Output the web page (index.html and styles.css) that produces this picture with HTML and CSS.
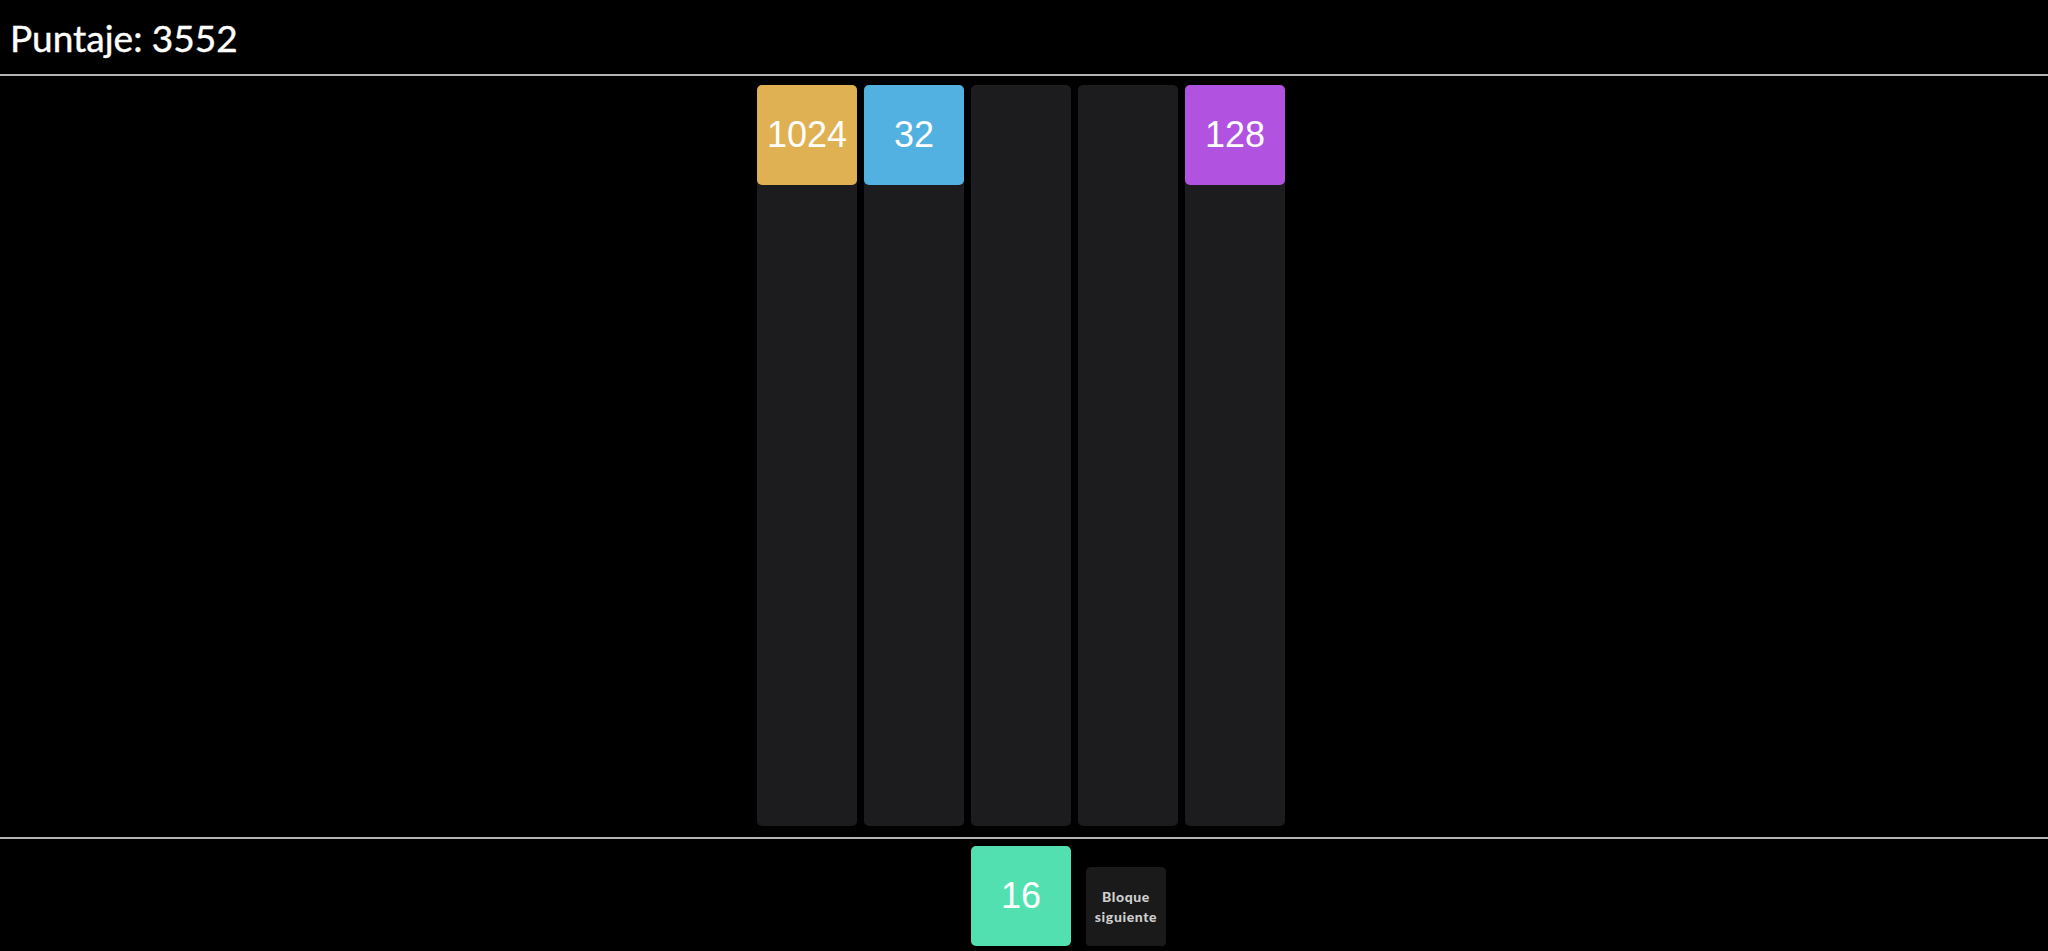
FILE: index.html
```html
<!DOCTYPE html>
<html lang="es">
<head>
  <meta charset="UTF-8">
  <title>2048 Columnas</title>
  <link rel="stylesheet" href="styles.css">
</head>
<body>
  <header class="top">
    <div class="score">Puntaje: 3552</div>
  </header>

  <main class="board-area">
    <div class="board">
      <div class="column">
        <div class="tile t1024">1024</div>
      </div>
      <div class="column">
        <div class="tile t32">32</div>
      </div>
      <div class="column"></div>
      <div class="column"></div>
      <div class="column">
        <div class="tile t128">128</div>
      </div>
    </div>
  </main>

  <footer class="bottom">
    <div class="current">
      <div class="tile t16">16</div>
    </div>
    <div class="next">
      <div class="next-box">Bloque<br>siguiente</div>
    </div>
  </footer>
</body>
</html>
```
FILE: styles.css
```css
body {
  margin: 0;
  background-color: #000;
  color: #fff;
  font-family: "Liberation Sans", Arial, sans-serif;
  overflow: hidden;
}
.top {
  height: 74px;
  display: flex;
  align-items: center;
  padding-left: 10px;
  border-bottom: 2px solid #b4b4b4;
}
.score {
  font-family: Lato, "Noto Sans", sans-serif;
  font-size: 37px;
  font-weight: 400;
  -webkit-text-stroke: 0.4px #fff;
  color: #fff;
}
.board-area {
  padding: 9px 6px 11px 0;
}
.board {
  display: flex;
  justify-content: center;
  gap: 7px;
}
.column {
  width: 100px;
  height: 741px;
  background-color: #1c1c1e;
  border-radius: 5px;
}
.tile {
  width: 100px;
  height: 100px;
  border-radius: 5px;
  display: flex;
  align-items: center;
  justify-content: center;
  font-size: 36px;
  color: #fff;
}
.t1024 { background-color: #e0b152; }
.t32 { background-color: #52b1e0; }
.t128 { background-color: #b152e0; }
.t16 { background-color: #52e0b1; }
.bottom {
  border-top: 2px solid #b4b4b4;
  padding: 7px 6px 0 0;
  display: grid;
  grid-template-columns: 1fr 100px 1fr;
}
.current {
  grid-column: 2;
}
.next {
  grid-column: 3;
  display: flex;
  align-items: flex-end;
  padding-left: 15px;
}
.next-box {
  width: 80px;
  height: 80px;
  margin-bottom: -1px;
  background-color: #1a1a1a;
  border-radius: 5px;
  display: flex;
  align-items: center;
  justify-content: center;
  text-align: center;
  font-family: Lato, "Noto Sans", sans-serif;
  font-weight: 900;
  font-size: 14px;
  letter-spacing: 0.6px;
  line-height: 20px;
  color: #cfcfcf;
}
```
